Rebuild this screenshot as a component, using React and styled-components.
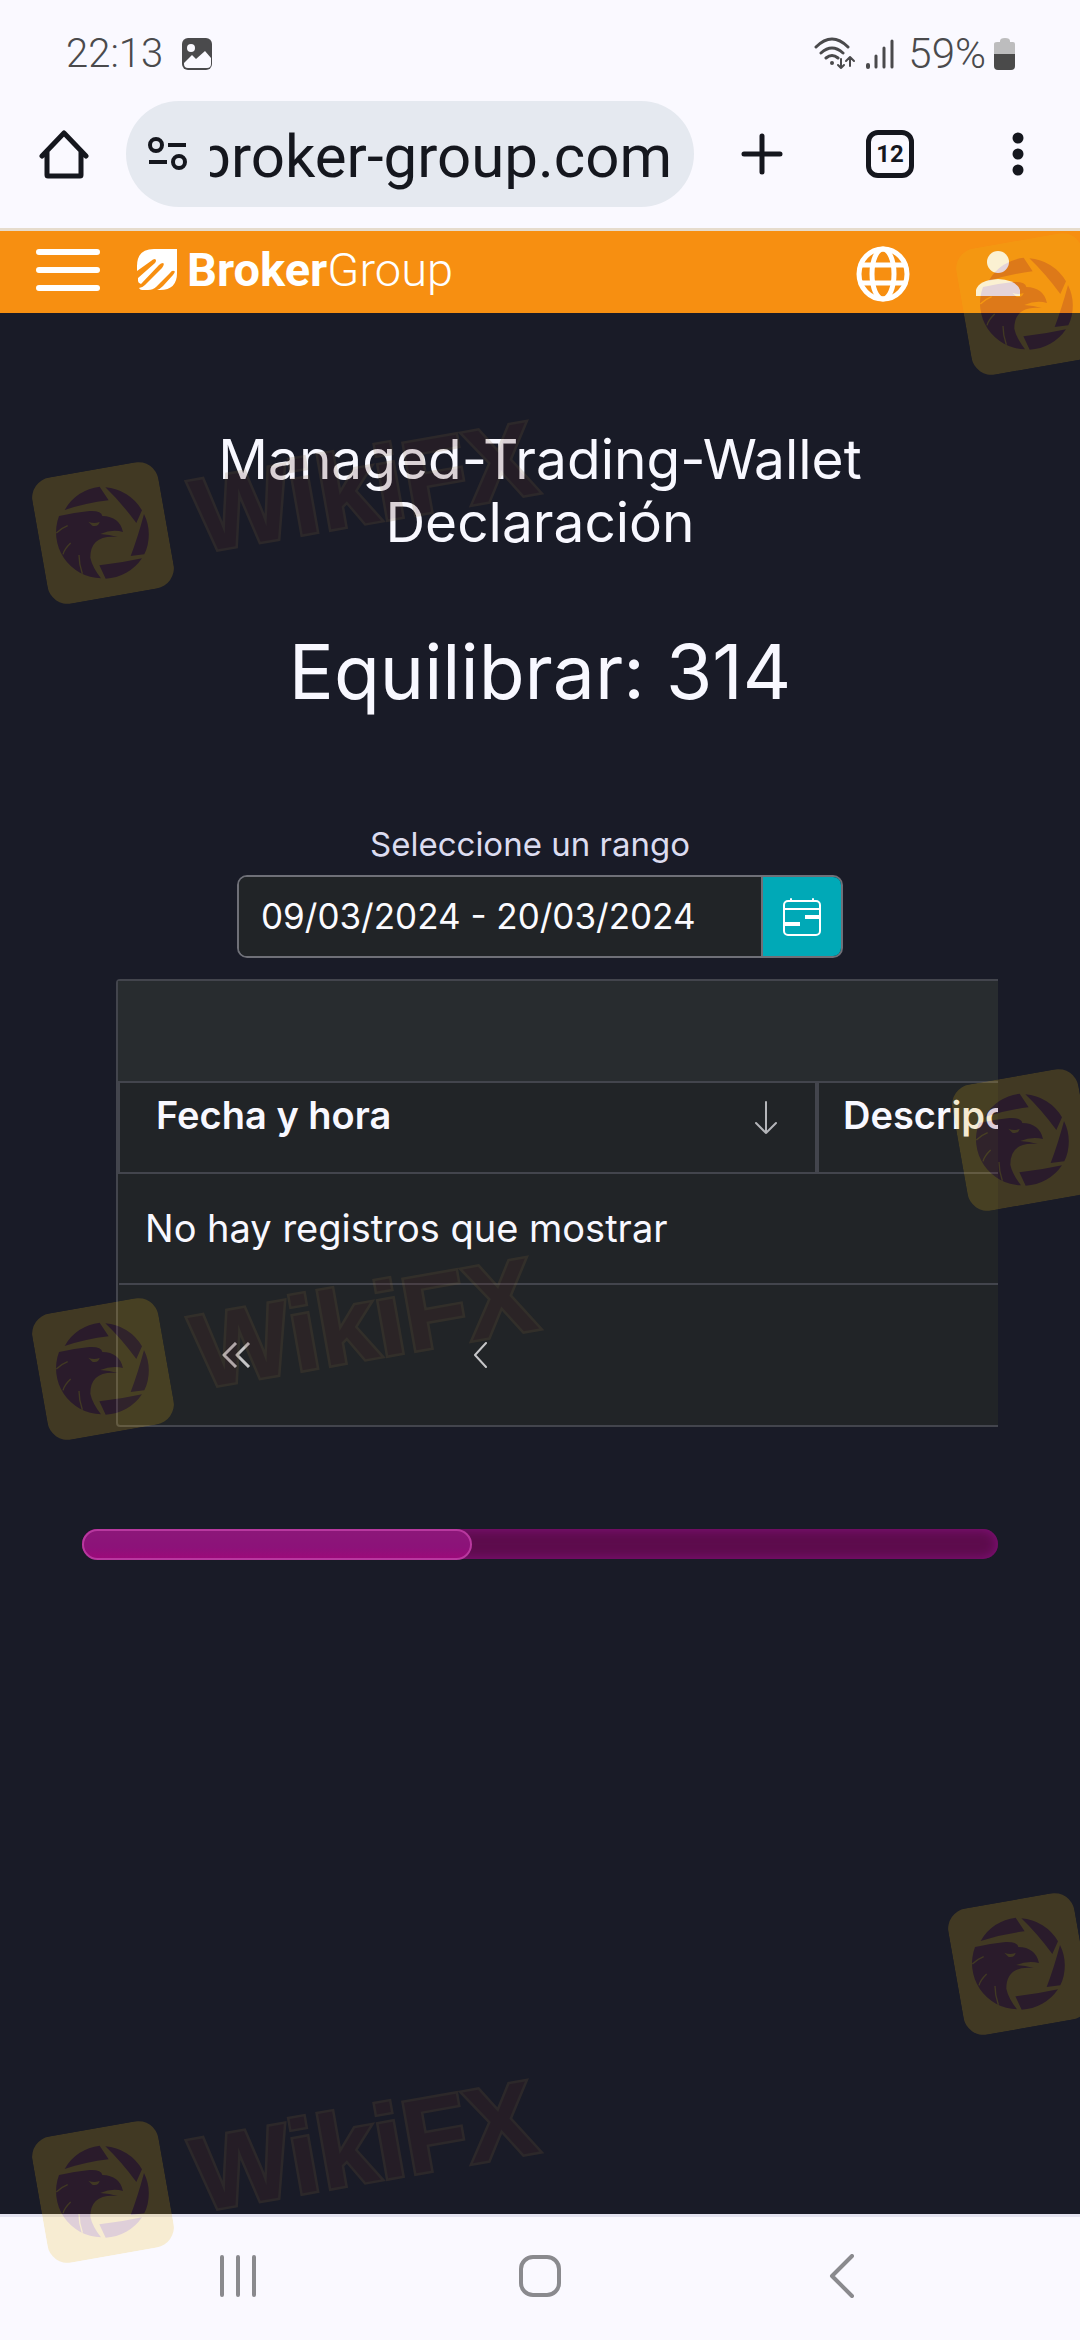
import styled, { createGlobalStyle } from "styled-components";

const GlobalStyles = createGlobalStyle`
  * {
    box-sizing: border-box;
  }

  body {
    margin: 0;
    background: #191b27;
    font-family: Inter, "Open Sans", sans-serif;
  }

  button {
    border: 0;
    padding: 0;
    background: none;
    color: inherit;
    font: inherit;
    display: flex;
    align-items: center;
    justify-content: center;
  }

  svg {
    display: block;
    flex: none;
  }
`;

const Screen = styled.div`
  position: relative;
  display: flex;
  flex-direction: column;
  min-height: 100vh;
  overflow: hidden;
`;

const StatusBar = styled.div`
  display: flex;
  align-items: center;
  justify-content: space-between;
  height: 101px;
  padding: 6px 65px 0 66px;
  background: #faf9ff;
  color: #4a4a4c;
  font-family: Roboto, sans-serif;
  font-size: 40px;
  font-weight: 300;
`;

const StatusGroup = styled.div`
  display: flex;
  align-items: center;
  gap: ${props => props.$gap}px;
`;

const BatteryLevel = styled.span`
  font-size: 42px;
`;

const BrowserBar = styled.div`
  display: flex;
  align-items: center;
  height: 130px;
  padding: 0 32px 22px 34px;
  background: #faf9ff;
  border-bottom: 3px solid #e6dccd;
  color: #15171e;
`;

const BarButton = styled.button`
  width: 60px;
  height: 60px;
`;

const AddressBar = styled.div`
  display: flex;
  align-items: center;
  flex: 1;
  min-width: 0;
  height: 106px;
  margin: 0 38px 0 32px;
  padding: 0 22px;
  border-radius: 53px;
  background: #e5e9f0;
`;

const Url = styled.div`
  display: flex;
  justify-content: flex-end;
  flex: 1;
  min-width: 0;
  overflow: hidden;
  margin-left: 22px;
  padding-top: 6px;
  font-family: Roboto, sans-serif;
  font-size: 60px;
  line-height: 80px;
  white-space: nowrap;
`;

const BarActions = styled.div`
  display: flex;
  align-items: center;
  gap: 74px;
`;

const TabCount = styled.button`
  width: 48px;
  height: 48px;
  border: 5px solid #15171e;
  border-radius: 12px;
  font-family: Roboto, sans-serif;
  font-size: 24px;
  font-weight: 700;
`;

const SiteHeader = styled.header`
  display: flex;
  align-items: center;
  height: 82px;
  padding: 0 60px 4px 36px;
  background: #f78f11;
  color: #fff;
`;

const Brand = styled.a`
  display: flex;
  align-items: center;
  gap: 9px;
  margin: 0 auto 0 36px;
  color: #fff;
  font-family: Roboto, sans-serif;
  font-size: 47px;
  font-weight: 300;
  line-height: 52px;
  text-decoration: none;

  b {
    font-weight: 700;
  }
`;

const HeaderActions = styled.div`
  display: flex;
  align-items: center;
  gap: 66px;
  padding-top: 8px;
`;

const Main = styled.main`
  flex: 1;
  padding: 115px 82px 0;
  color: #f8f8ff;
`;

const Title = styled.h1`
  margin: 0;
  font-size: 55px;
  font-weight: 400;
  line-height: 63px;
  text-align: center;
`;

const Balance = styled.h2`
  margin: 72px 0 0;
  font-size: 75px;
  font-weight: 400;
  line-height: 92px;
  text-align: center;
`;

const RangeField = styled.div`
  display: flex;
  flex-direction: column;
  align-items: center;
  margin-top: 100px;
`;

const RangeLabel = styled.label`
  margin-bottom: 5px;
  padding-right: 20px;
  color: #dcdcf0;
  font-size: 33px;
  font-weight: 400;
  line-height: 52px;
`;

const RangeBox = styled.div`
  display: flex;
  width: 606px;
  max-width: 100%;
  height: 83px;
  border: 2px solid #6f7078;
  border-radius: 10px;
  overflow: hidden;
`;

const RangeInput = styled.input`
  flex: 1;
  min-width: 0;
  padding: 0 22px 2px;
  border: 0;
  background: #212427;
  color: #fbfbff;
  font-family: inherit;
  font-size: 35px;
  font-weight: 400;
`;

const RangeButton = styled.button`
  width: 80px;
  border-left: 2px solid #6f7078;
  background: #00a9b7;
  color: #fff;
`;

const TableScroller = styled.section`
  margin-top: 21px;
  padding-left: 34px;
  overflow: hidden;
`;

const Panel = styled.div`
  width: 1500px;
  border: 2px solid #43454d;
  border-radius: 4px;
  background: #212427;
`;

const Toolbar = styled.div`
  height: 100px;
  background: #282c2f;
`;

const Table = styled.table`
  width: 100%;
  border-collapse: collapse;
  table-layout: fixed;
  font-size: 38px;
  text-align: left;
`;

const HeadCell = styled.th`
  width: ${props => props.$width};
  height: 91px;
  padding: 0 38px 26px ${props => props.$left}px;
  border: 2px solid #43454d;
  border-width: 2px 4px 2px 2px;
  font-weight: 600;
`;

const HeadContent = styled.div`
  display: flex;
  align-items: center;
  justify-content: space-between;

  svg {
    margin-top: 6px;
  }
`;

const EmptyCell = styled.td`
  height: 111px;
  padding: 0 26px 2px;
  border-bottom: 2px solid #43454d;
  font-weight: 400;
`;

const Pager = styled.nav`
  display: flex;
  gap: 8px;
  height: 140px;
  color: #c6c6c8;
`;

const PagerButton = styled.button`
  width: 236px;
  height: 100%;
`;

const ScrollTrack = styled.div`
  height: 30px;
  margin-top: 102px;
  border-radius: 15px;
  background: #5d0c4d;
  box-shadow: inset 0 0 12px #85107c;
`;

const ScrollThumb = styled.div`
  width: 390px;
  height: 31px;
  border: 2px solid #b8389f;
  border-radius: 16px;
  background: linear-gradient(#8c1779, #8c1279 60%, #9c0a7a);
`;

const SystemNav = styled.nav`
  display: flex;
  align-items: center;
  justify-content: space-between;
  height: 126px;
  padding: 0 216px 6px;
  border-top: 3px solid #e3e3f0;
  background: #faf9ff;
  color: #8a8a8e;
`;

const SystemButton = styled.button`
  width: 44px;
  height: 60px;
`;

const Watermark = styled.div`
  position: absolute;
  top: ${props => props.$top}px;
  left: ${props => props.$left}px;
  display: flex;
  align-items: center;
  gap: 28px;
  opacity: 0.19;
  transform: rotate(-10deg);
  transform-origin: 64px 64px;
  pointer-events: none;
`;

const WatermarkText = styled.span`
  color: #5a2824;
  font-family: "Liberation Sans", sans-serif;
  font-size: 104px;
  font-weight: 700;
  line-height: 120px;
  paint-order: stroke;
  -webkit-text-stroke: 5px #7d6038;
`;

const stroke = {
  fill: "none",
  stroke: "currentColor",
  strokeLinecap: "round",
  strokeLinejoin: "round",
};

const PictureIcon = () => (
  <svg width="32" height="32" viewBox="0 0 32 32">
    <rect x="1" y="0" width="30" height="32" rx="6" fill="#4a4a4c" />
    <path d="M3 25l8-8 4 4 9-8 6 7v6q0 4-4 4H7q-4 0-4-4z" fill="#faf9ff" />
    <circle cx="10" cy="10" r="4" fill="#faf9ff" />
  </svg>
);

const WifiIcon = () => (
  <svg width="42" height="34" viewBox="0 0 42 34" {...stroke} strokeWidth="3">
    <path d="M2 10Q18-6 34 10M7 16q11-10 22 0M12 21q6-5 12 0" />
    <circle cx="18" cy="26" r="2" fill="currentColor" stroke="none" />
    <path d="M27 22v9m-3-3l3 3 3-3M36 29v-9m-4 4l4-4 4 4" strokeWidth="2" />
  </svg>
);

const SignalIcon = () => (
  <svg width="36" height="32" viewBox="0 0 36 32" {...stroke} strokeWidth="4">
    <path d="M4 27v2" />
    <path d="M12 18v11M20 10v19M28 3v26" strokeWidth="3" />
  </svg>
);

const BatteryIcon = () => (
  <svg width="21" height="32" viewBox="0 0 21 32">
    <path d="M0 16V6q0-2 3-2h3V3q0-3 5-3t5 3v1h3q2 0 2 2v10z" fill="#bdbdbe" />
    <path d="M0 16h21v12q0 4-4 4H4q-4 0-4-4z" fill="#4a4a4a" />
  </svg>
);

const HomeIcon = () => (
  <svg width="50" height="50" viewBox="0 0 50 50" {...stroke} strokeWidth="5">
    <path d="M3 27L25 4l22 23M8 23v23q0 1 1 1h32q1 0 1-1V23" />
  </svg>
);

const TuneIcon = () => (
  <svg width="40" height="36" viewBox="0 0 40 36" {...stroke} strokeWidth="4" strokeLinecap="butt">
    <circle cx="8" cy="9" r="6" />
    <path d="M20 9h18M1 26h18" />
    <circle cx="31" cy="26" r="6" />
  </svg>
);

const PlusIcon = () => (
  <svg width="42" height="42" viewBox="0 0 42 42" {...stroke} strokeWidth="5">
    <path d="M21 3v36M3 21h36" />
  </svg>
);

const DotsIcon = () => (
  <svg width="12" height="44" viewBox="0 0 12 44" fill="currentColor">
    <circle cx="6" cy="6" r="5.5" />
    <circle cx="6" cy="22" r="5.5" />
    <circle cx="6" cy="38" r="5.5" />
  </svg>
);

const MenuIcon = () => (
  <svg width="64" height="42" viewBox="0 0 64 42" {...stroke} strokeWidth="6">
    <path d="M3 3h58M3 21h58M3 39h58" />
  </svg>
);

const BrandIcon = () => (
  <svg width="42" height="42" viewBox="0 0 42 42" fill="#fff">
    <path d="M41 0v24q0 17-17 17H21q3-1 6-4l10-11q3-4 1-4-2-1-4 2L20 38q-3 3-8 3H6q-2 0-3-2 3 0 6-3l17-17q3-4 1-5-2 0-4 2L5 35q-3-1-3-3v-3l17-15q2-3 0-4-2 0-4 2L1 22V17Q1 0 18 0z" />
  </svg>
);

const GlobeIcon = () => (
  <svg width="54" height="56" viewBox="0 0 54 56" {...stroke} strokeWidth="5">
    <ellipse cx="27" cy="28" rx="24" ry="25" />
    <ellipse cx="27" cy="28" rx="11" ry="25" />
    <path d="M5 19h44M5 37h44" />
  </svg>
);

const UserIcon = () => (
  <svg width="44" height="46" viewBox="0 0 44 46" fill="#fff">
    <circle cx="22" cy="11" r="11" />
    <path d="M0 45v-6q3-10 22-11 19 1 22 11v6z" />
  </svg>
);

const CalendarIcon = () => (
  <svg width="38" height="38" viewBox="0 0 38 38" {...stroke} strokeWidth="2">
    <rect x="1" y="3" width="36" height="34" rx="4" />
    <path d="M1 11h36M8 1v2M30 1v2" />
    <path d="M2 26h15M22 19h14" strokeWidth="4" strokeLinecap="butt" />
  </svg>
);

const SortIcon = () => (
  <svg width="22" height="34" viewBox="0 0 22 34" {...stroke} color="#b4b5b9" strokeWidth="2">
    <path d="M11 1v31M1 22l10 10 10-10" />
  </svg>
);

const FirstIcon = () => (
  <svg width="30" height="26" viewBox="0 0 30 26" {...stroke} strokeWidth="3" strokeLinecap="butt">
    <path d="M15 1L3 13l12 12M28 1L16 13l12 12" />
  </svg>
);

const PrevIcon = () => (
  <svg width="14" height="26" viewBox="0 0 14 26" {...stroke} strokeWidth="2">
    <path d="M13 1L2 13l11 12" />
  </svg>
);

const RecentsIcon = () => (
  <svg width="40" height="42" viewBox="0 0 40 42" {...stroke} strokeWidth="4">
    <path d="M4 2v38M20 2v38M36 2v38" />
  </svg>
);

const HomeKeyIcon = () => (
  <svg width="42" height="42" viewBox="0 0 42 42" {...stroke} strokeWidth="4">
    <rect x="2" y="2" width="38" height="38" rx="12" />
  </svg>
);

const BackIcon = () => (
  <svg width="26" height="44" viewBox="0 0 26 44" {...stroke} strokeWidth="4">
    <path d="M23 2L3 22l20 20" />
  </svg>
);

const EagleBadge = () => (
  <svg width="128" height="128" viewBox="24 24 384 384">
    <rect x="24" y="24" width="384" height="384" rx="62" fill="#ecb914" />
    <g transform="rotate(10 216 216)">
      <g fill="#72203c">
        <path d="M101 147A138 138 0 0 1 206 77L233 118Q165 126 101 147z" />
        <path d="M223 79A138 138 0 0 1 333 148L316 186Q270 124 223 79z" />
        <path d="M339 159A138 138 0 0 1 340 280L299 285Q320 230 339 159z" />
        <path d="M333 292A138 138 0 0 1 224 353L205 313Q270 306 333 292z" />
        <path d="M84 165Q130 154 175 150 211 148 214 165 266 166 276 213 244 204 208 219 236 221 260 228 178 220 178 290 184 318 210 352A138 138 0 0 1 84 165z" />
      </g>
      <g fill="none" stroke="#ecb914" strokeWidth="4">
        <path d="M76 216Q90 202 110 194M96 280Q100 264 119 246M144 282Q144 310 154 338" />
      </g>
      <path d="M172 182Q188 190 206 183 202 198 184 194z" fill="#ecb914" />
    </g>
  </svg>
);

const marks = [
  { top: 469, left: 39, text: true },
  { top: 1305, left: 39, text: true },
  { top: 2128, left: 39, text: true },
  { top: 240, left: 963 },
  { top: 1076, left: 959 },
  { top: 1900, left: 955 },
];

const App = () => {
  return (
    <>
      <GlobalStyles />
      <Screen>
        <StatusBar>
          <StatusGroup $gap={18}>
            <span>22:13</span>
            <PictureIcon />
          </StatusGroup>
          <StatusGroup $gap={8}>
            <WifiIcon />
            <SignalIcon />
            <BatteryLevel>59%</BatteryLevel>
            <BatteryIcon />
          </StatusGroup>
        </StatusBar>

        <BrowserBar>
          <BarButton aria-label="Inicio">
            <HomeIcon />
          </BarButton>
          <AddressBar>
            <TuneIcon />
            <Url>broker-group.com</Url>
          </AddressBar>
          <BarActions>
            <BarButton aria-label="Nueva pestaña">
              <PlusIcon />
            </BarButton>
            <TabCount>12</TabCount>
            <BarButton aria-label="Más opciones">
              <DotsIcon />
            </BarButton>
          </BarActions>
        </BrowserBar>

        <SiteHeader>
          <button aria-label="Menú">
            <MenuIcon />
          </button>
          <Brand href="#">
            <BrandIcon />
            <span><b>Broker</b>Group</span>
          </Brand>
          <HeaderActions>
            <button aria-label="Idioma">
              <GlobeIcon />
            </button>
            <button aria-label="Cuenta">
              <UserIcon />
            </button>
          </HeaderActions>
        </SiteHeader>

        <Main>
          <Title>
            Managed-Trading-Wallet
            <br />
            Declaración
          </Title>
          <Balance>Equilibrar: 314</Balance>

          <RangeField>
            <RangeLabel htmlFor="range">Seleccione un rango</RangeLabel>
            <RangeBox>
              <RangeInput id="range" type="text" defaultValue="09/03/2024 - 20/03/2024" />
              <RangeButton aria-label="Abrir calendario">
                <CalendarIcon />
              </RangeButton>
            </RangeBox>
          </RangeField>

          <TableScroller>
            <Panel>
              <Toolbar />
              <Table>
                <thead>
                  <tr>
                    <HeadCell $width="698px" $left={36}>
                      <HeadContent>
                        Fecha y hora
                        <SortIcon />
                      </HeadContent>
                    </HeadCell>
                    <HeadCell $left={24}>Descripción</HeadCell>
                  </tr>
                </thead>
                <tbody>
                  <tr>
                    <EmptyCell colSpan={2}>No hay registros que mostrar</EmptyCell>
                  </tr>
                </tbody>
              </Table>
              <Pager>
                <PagerButton aria-label="Primera página">
                  <FirstIcon />
                </PagerButton>
                <PagerButton aria-label="Página anterior">
                  <PrevIcon />
                </PagerButton>
              </Pager>
            </Panel>
          </TableScroller>

          <ScrollTrack>
            <ScrollThumb />
          </ScrollTrack>
        </Main>

        <SystemNav>
          <SystemButton aria-label="Recientes">
            <RecentsIcon />
          </SystemButton>
          <SystemButton aria-label="Pantalla de inicio">
            <HomeKeyIcon />
          </SystemButton>
          <SystemButton aria-label="Atrás">
            <BackIcon />
          </SystemButton>
        </SystemNav>

        {marks.map(mark => (
          <Watermark key={`${mark.left}-${mark.top}`} $top={mark.top} $left={mark.left}>
            <EagleBadge />
            {mark.text && <WatermarkText>WikiFX</WatermarkText>}
          </Watermark>
        ))}
      </Screen>
    </>
  );
};

export default App;
